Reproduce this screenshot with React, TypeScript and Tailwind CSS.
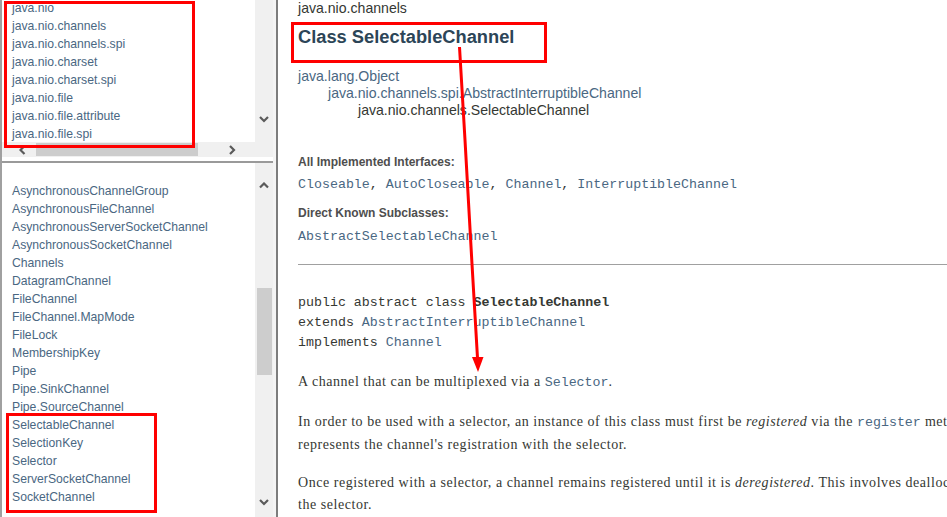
import React from 'react';

const TOP_PACKAGES = [
  'java.nio',
  'java.nio.channels',
  'java.nio.channels.spi',
  'java.nio.charset',
  'java.nio.charset.spi',
  'java.nio.file',
  'java.nio.file.attribute',
  'java.nio.file.spi',
];

const CLASSES = [
  'AsynchronousChannelGroup',
  'AsynchronousFileChannel',
  'AsynchronousServerSocketChannel',
  'AsynchronousSocketChannel',
  'Channels',
  'DatagramChannel',
  'FileChannel',
  'FileChannel.MapMode',
  'FileLock',
  'MembershipKey',
  'Pipe',
  'Pipe.SinkChannel',
  'Pipe.SourceChannel',
  'SelectableChannel',
  'SelectionKey',
  'Selector',
  'ServerSocketChannel',
  'SocketChannel',
];

function Chevron({ dir }: { dir: 'up' | 'down' | 'left' | 'right' }) {
  const vertical = dir === 'up' || dir === 'down';
  const points = {
    up: '1,5.5 5,1.5 9,5.5',
    down: '1,1 5,5 9,1',
    left: '5.5,1 1.5,5 5.5,9',
    right: '1,1 5,5 1,9',
  }[dir];
  return (
    <svg width={vertical ? 10 : 7} height={vertical ? 7 : 10} className="block shrink-0">
      <polyline points={points} fill="none" stroke="#5a5a5a" strokeWidth="2.2" />
    </svg>
  );
}

function LinkList({ items }: { items: string[] }) {
  return (
    <ul className="pl-[10px] text-[12.2px] leading-[18px] text-[#4a6782] whitespace-nowrap">
      {items.map((item) => (
        <li key={item}>{item}</li>
      ))}
    </ul>
  );
}

const sans = { fontFamily: '"Liberation Sans", Arial, sans-serif' };
const mono = 'font-["Liberation_Mono",monospace] text-[13.3px] tracking-normal';
const serif = 'font-["Liberation_Serif",serif] text-[14px] tracking-[0.55px]';

export default function App() {
  return (
    <div className="relative flex h-[517px] w-[947px] overflow-hidden bg-white" style={sans}>
      {/* left frames */}
      <div className="flex h-full w-[278px] shrink-0">
        <div className="flex h-full w-[273px] flex-col border-l-2 border-[#a0a0a0]">
          <div className="flex h-[161px] shrink-0 flex-col">
            <div className="flex h-[142px]">
              <div className="flex-1 overflow-hidden">
                <div className="-mt-[1px]">
                  <LinkList items={TOP_PACKAGES} />
                </div>
              </div>
              <div className="flex w-[18px] flex-col items-center justify-end bg-[#f0f0f0] pb-[19px]">
                <Chevron dir="down" />
              </div>
            </div>
            <div className="flex h-[15px] bg-[#f0f0f0]">
              <div className="flex w-[34px] items-center justify-end pr-[10px]">
                <Chevron dir="left" />
              </div>
              <div className="my-[1px] w-[162px] bg-[#cdcdcd]" />
              <div className="flex flex-1 items-center pl-[31px]">
                <Chevron dir="right" />
              </div>
              <div className="w-[18px]" />
            </div>
          </div>
          <div className="h-[2px] shrink-0 bg-[#9a9a9a]" />
          <div className="flex min-h-0 flex-1">
            <div className="flex-1 overflow-hidden pt-[19px]">
              <LinkList items={CLASSES} />
            </div>
            <div className="flex w-[18px] flex-col items-center bg-[#f0f0f0] pt-[19px] pb-[11px]">
              <Chevron dir="up" />
              <div className="mt-[99px] h-[87px] w-[15px] bg-[#cdcdcd]" />
              <div className="flex-1" />
              <Chevron dir="down" />
            </div>
          </div>
        </div>
        <div className="w-[3px] bg-[#f4f4f4]" />
        <div className="w-[2px] bg-[#7d7d7d]" />
      </div>

      {/* class page */}
      <div className="min-w-0 flex-1 overflow-hidden whitespace-nowrap pl-[20px] text-[#353833]">
        <div className="text-[14.1px] leading-[16px]">java.nio.channels</div>
        <h2 className="mt-[10px] text-[18.3px] leading-[22px] font-bold text-[#2c4557]">Class SelectableChannel</h2>

        <div className="mt-[19.5px] text-[14.1px] leading-[17px]">
          <div className="text-[#4a6782]">java.lang.Object</div>
          <div className="pl-[30px] text-[#4a6782]">java.nio.channels.spi.AbstractInterruptibleChannel</div>
          <div className="pl-[60px]">java.nio.channels.SelectableChannel</div>
        </div>

        <div className="mt-[35.5px] text-[12px] leading-[16px] font-bold text-[#4e4e4e]">All Implemented Interfaces:</div>
        <div className={`mt-[7px] leading-[16px] text-[#4a6782] ${mono}`}>
          Closeable<span className="text-[#353833]">, </span>AutoCloseable<span className="text-[#353833]">, </span>Channel
          <span className="text-[#353833]">, </span>InterruptibleChannel
        </div>
        <div className="mt-[12px] text-[12px] leading-[16px] font-bold text-[#4e4e4e]">Direct Known Subclasses:</div>
        <div className={`mt-[8px] leading-[16px] text-[#4a6782] ${mono}`}>AbstractSelectableChannel</div>

        <div className="mt-[19px] h-px w-[700px] bg-[#a0a0a0]" />

        <div className={`mt-[28px] leading-[20px] ${mono}`}>
          <div>
            public abstract class <span className="font-bold">SelectableChannel</span>
          </div>
          <div>
            extends <span className="text-[#4a6782]">AbstractInterruptibleChannel</span>
          </div>
          <div>
            implements <span className="text-[#4a6782]">Channel</span>
          </div>
        </div>

        <p className={`mt-[18px] leading-[22px] ${serif}`}>
          A channel that can be multiplexed via a <span className={`text-[#4a6782] ${mono}`}>Selector</span>.
        </p>

        <p className={`mt-[17px] leading-[22px] ${serif}`}>
          In order to be used with a selector, an instance of this class must first be <i>registered</i> via the{' '}
          <code className={`text-[#4a6782] ${mono}`}>register</code> method. This method returns a new SelectionKey object that
          <br />
          represents the channel's registration with the selector.
        </p>

        <p className={`mt-[16px] leading-[22px] ${serif}`}>
          Once registered with a selector, a channel remains registered until it is <i>deregistered</i>. This involves deallocating
          whatever resources were allocated to the channel by
          <br />
          the selector.
        </p>
      </div>

      {/* annotations */}
      <div className="pointer-events-none absolute left-[4px] top-[1px] h-[147px] w-[191px] border-[3px] border-[#ff0000]" />
      <div className="pointer-events-none absolute left-[6px] top-[413px] h-[100px] w-[151px] border-[3px] border-[#ff0000]" />
      <div className="pointer-events-none absolute left-[291px] top-[22px] h-[41px] w-[256px] border-[3px] border-[#ff0000]" />
      <svg className="pointer-events-none absolute left-0 top-0" width="947" height="517">
        <path d="M459.5 47 L465 140 L472 264 L477.5 358" fill="none" stroke="#ff0000" strokeWidth="3" />
        <polygon points="472,357 483.5,357 478,372" fill="#ff0000" />
      </svg>
    </div>
  );
}
